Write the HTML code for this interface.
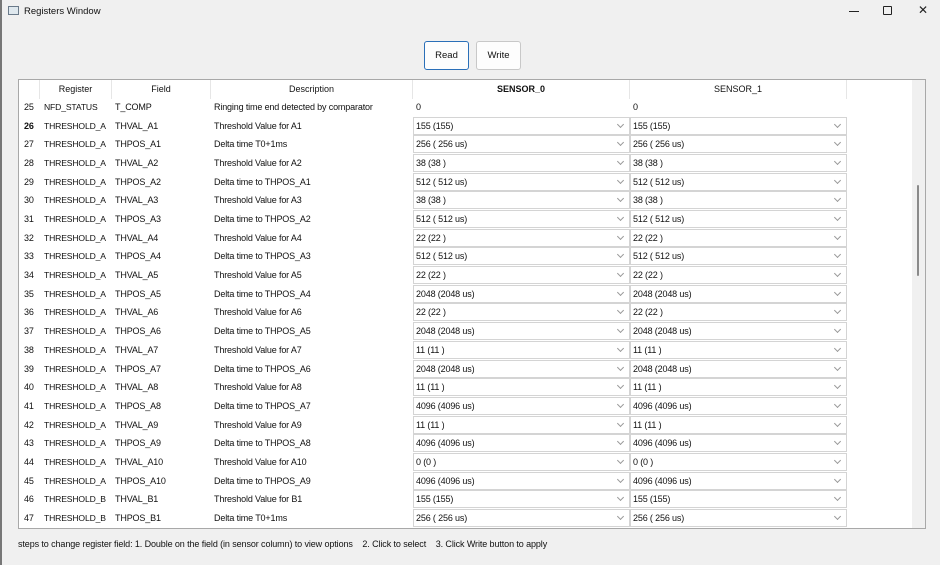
<!DOCTYPE html>
<html><head><meta charset="utf-8"><style>
*{margin:0;padding:0;box-sizing:border-box}
body{width:940px;height:565px;background:#f0f0f0;font-family:"Liberation Sans",sans-serif;font-size:9px;color:#111;position:relative;overflow:hidden}
.a{position:absolute;white-space:nowrap}
.btn{position:absolute;top:41px;height:29px;background:#fdfdfd;border:1px solid #c8c8c8;border-radius:3px;text-align:center;line-height:27px;font-size:9.5px}
#tbl{position:absolute;left:18px;top:79px;width:908px;height:450px;background:#fff;border:1px solid #a8a8a8;overflow:hidden}
.h{position:absolute;top:0;height:19px;line-height:19px;text-align:center;border-right:1px solid #e6e6e6}
.row{position:absolute;left:0;width:890px;height:19px;line-height:19px}
.row span{position:absolute;letter-spacing:-0.15px}
.cb{position:absolute;height:18px;top:0;border:1px solid #d4d4d4;background:#fff;padding-left:2px;line-height:16px;letter-spacing:-0.15px}
.cb i{position:absolute;right:6px;top:4px;width:5px;height:5px;border-right:1px solid #999;border-bottom:1px solid #999;transform:rotate(45deg)}
</style></head><body>
<div class="a" style="left:0;top:0;width:2px;height:565px;background:#777"></div>
<div class="a" style="left:8px;top:6px;width:11px;height:9px;border:1px solid #6a7a8a;background:#dfe8ee"></div>
<div class="a" style="left:24px;top:6px;font-size:9.5px">Registers Window</div>
<div class="a" style="left:849px;top:11px;width:10px;height:1px;background:#222"></div>
<div class="a" style="left:883px;top:6px;width:9px;height:9px;border:1px solid #222;border-radius:1px"></div>
<div class="a" style="left:918px;top:3px;font-size:12px;color:#222">✕</div>
<div class="btn" style="left:424px;width:45px;border-color:#2a6fb8">Read</div>
<div class="btn" style="left:476px;width:45px">Write</div>
<div id="tbl">
<div class="h" style="left:0;width:21px"></div>
<div class="h" style="left:21px;width:72px">Register</div>
<div class="h" style="left:93px;width:99px">Field</div>
<div class="h" style="left:192px;width:202px">Description</div>
<div class="h" style="left:394px;width:217px;font-weight:bold">SENSOR_0</div>
<div class="h" style="left:611px;width:217px">SENSOR_1</div>
<div class="a" style="left:893px;top:0;width:13px;height:450px;background:#f0f0f0"></div>
<div class="a" style="left:898px;top:105px;width:2px;height:91px;background:#8a8a8a;border-radius:1px"></div>
<div id="rows"></div>
</div>
<div class="a" style="left:18px;top:539px;letter-spacing:-0.1px">steps to change register field: 1. Double on the field (in sensor column) to view options &nbsp;&nbsp; 2. Click to select &nbsp;&nbsp; 3. Click Write button to apply</div>
<script>
var d=[
[25,"NFD_STATUS","T_COMP","Ringing time end detected by comparator","0"],
[26,"THRESHOLD_A","THVAL_A1","Threshold Value for A1","155 (155)"],
[27,"THRESHOLD_A","THPOS_A1","Delta time T0+1ms","256 ( 256 us)"],
[28,"THRESHOLD_A","THVAL_A2","Threshold Value for A2","38 (38 )"],
[29,"THRESHOLD_A","THPOS_A2","Delta time to THPOS_A1","512 ( 512 us)"],
[30,"THRESHOLD_A","THVAL_A3","Threshold Value for A3","38 (38 )"],
[31,"THRESHOLD_A","THPOS_A3","Delta time to THPOS_A2","512 ( 512 us)"],
[32,"THRESHOLD_A","THVAL_A4","Threshold Value for A4","22 (22 )"],
[33,"THRESHOLD_A","THPOS_A4","Delta time to THPOS_A3","512 ( 512 us)"],
[34,"THRESHOLD_A","THVAL_A5","Threshold Value for A5","22 (22 )"],
[35,"THRESHOLD_A","THPOS_A5","Delta time to THPOS_A4","2048 (2048 us)"],
[36,"THRESHOLD_A","THVAL_A6","Threshold Value for A6","22 (22 )"],
[37,"THRESHOLD_A","THPOS_A6","Delta time to THPOS_A5","2048 (2048 us)"],
[38,"THRESHOLD_A","THVAL_A7","Threshold Value for A7","11 (11 )"],
[39,"THRESHOLD_A","THPOS_A7","Delta time to THPOS_A6","2048 (2048 us)"],
[40,"THRESHOLD_A","THVAL_A8","Threshold Value for A8","11 (11 )"],
[41,"THRESHOLD_A","THPOS_A8","Delta time to THPOS_A7","4096 (4096 us)"],
[42,"THRESHOLD_A","THVAL_A9","Threshold Value for A9","11 (11 )"],
[43,"THRESHOLD_A","THPOS_A9","Delta time to THPOS_A8","4096 (4096 us)"],
[44,"THRESHOLD_A","THVAL_A10","Threshold Value for A10","0 (0 )"],
[45,"THRESHOLD_A","THPOS_A10","Delta time to THPOS_A9","4096 (4096 us)"],
[46,"THRESHOLD_B","THVAL_B1","Threshold Value for B1","155 (155)"],
[47,"THRESHOLD_B","THPOS_B1","Delta time T0+1ms","256 ( 256 us)"]];
var h="";
d.forEach(function(r,i){
 var t=18+i*18.68;
 h+='<div class="row" style="top:'+t+'px"><span style="left:5px'+(i==1?';font-weight:bold':'')+'">'+r[0]+'</span><span style="left:25px;font-size:8.6px">'+r[1]+'</span><span style="left:96px">'+r[2]+'</span><span style="left:195px">'+r[3]+'</span>';
 if(i==0){h+='<span style="left:397px">0</span><span style="left:614px">0</span>';}
 else{h+='<div class="cb" style="left:394px;width:217px">'+r[4]+'<i></i></div><div class="cb" style="left:611px;width:217px">'+r[4]+'<i></i></div>';}
 h+='</div>';
});
document.getElementById("rows").innerHTML=h;
</script>
</body></html>
